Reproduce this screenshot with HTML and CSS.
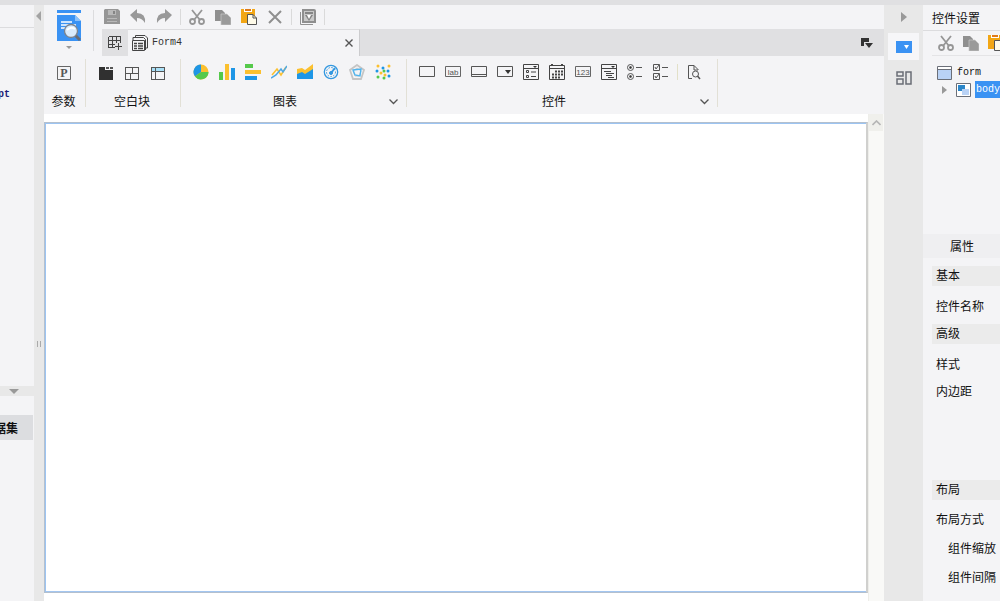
FILE: index.html
```html
<!DOCTYPE html>
<html lang="zh-CN">
<head>
<meta charset="utf-8">
<title>Form4</title>
<link rel="stylesheet" href="styles.css">
</head>
<body>
<div class="app">
  <aside class="left">
    <div class="left-top">
      <div class="left-head"></div>
      <div class="file">pt</div>
    </div>
    <button class="fold" aria-label="折叠"><svg width="10" height="5" viewBox="0 0 10 5"><path d="M0 0h10L5 5z" fill="#999"/></svg></button>
    <div class="left-bottom"><button class="dataset"><span>据集</span></button></div>
  </aside>

  <div class="splitter">
    <svg width="6" height="10" viewBox="0 0 6 10"><path d="M5 0v10L0 5z" fill="#a3a3a3"/></svg>
    <svg class="grip" width="4" height="6" viewBox="0 0 4 6" shape-rendering="crispEdges"><path d="M0 0h1v6H0zM3 0h1v6H3z" fill="#aaa"/></svg>
  </div>

  <main class="main">
    <header class="header">
      <button class="logo" aria-label="预览">
        <svg width="24" height="40" viewBox="0 0 24 40"><path d="M0 0h24v3H0zM0 5h18l6 6v20H0z" fill="#3a92f3"/><path d="M18 5v6h6z" fill="#8bc1fa"/><path d="M4 12h11M4 15h15M4 18h7" stroke="#fff" stroke-width="1.500"/><path d="M18 25l5 5" stroke="#686c75" stroke-width="3"/><circle cx="14" cy="21" r="6.500" fill="#d9ebfc" stroke="#7d838c" stroke-width="1.300"/><path d="M10 20q4-4 8-1" stroke="#fff" fill="none" stroke-width="2"/><path d="M9 36h6l-3 3z" fill="#999"/></svg>
      </button>
      <div class="header-body">
        <div class="quick">
          <button aria-label="保存"><svg viewBox="0 0 16 16"><path d="M1 0h13l2 2v13H0V1z" fill="#969696"/><path d="M4 1h8v5H4zM3 9h10v1H3zM3 12h10v1H3z" fill="#b9b9b9"/><path d="M9 2h2v3H9z" fill="#858585"/></svg></button>
          <button aria-label="撤销"><svg viewBox="0 0 16 16"><path d="M0 6l7-6v4q9 0 8 10-3-5-8-5v4z" fill="#999"/></svg></button>
          <button aria-label="重做"><svg viewBox="0 0 16 16"><path d="M16 6L9 0v4Q0 4 1 14q3-5 8-5v4z" fill="#999"/></svg></button>
          <i class="bar"></i>
          <button aria-label="剪切"><svg viewBox="0 0 16 16"><g fill="none" stroke="#969696" stroke-width="1.800"><path d="M3 1l8 10M13 1L5 11"/><circle cx="3.500" cy="12.500" r="2.500"/><circle cx="12.500" cy="12.500" r="2.500"/></g></svg></button>
          <button aria-label="复制"><svg viewBox="0 0 16 16"><path d="M0 1h7l3 3v8H0z" fill="#8f8f8f"/><path d="M6 5h6l4 4v7H6z" fill="#9a9a9a" stroke="#c8c8c8" stroke-width=".7"/></svg></button>
          <button aria-label="粘贴"><svg viewBox="0 0 16 16"><path d="M0 0h14v14H0z" fill="#f2a614"/><path d="M3 0h8v3H3z" fill="#fff"/><path d="M4 0h6v2H4z" fill="#df7a18"/><path d="M6.500 5.500H12l3.500 3.500v6.500h-9z" fill="#fffbe9" stroke="#555"/><path d="M12 5.500V9h3.500" fill="none" stroke="#555"/></svg></button>
          <button aria-label="删除"><svg viewBox="0 0 16 16"><path d="M2 2l12 12M14 2L2 14" stroke="#8f8f8f" stroke-width="2"/></svg></button>
          <i class="bar"></i>
          <button aria-label="模板"><svg viewBox="0 0 16 16"><path d="M0.500 3v12.500H13" fill="none" stroke="#929292"/><path d="M2 0h12q2 0 2 2v12H2z" fill="#8f8f8f"/><path d="M4 2h10v10H4z" fill="#c9c9c9"/><path d="M5 3h8v2H5zM5 6h8l-4 6z" fill="#858585"/><path d="M7 6h4l-2 4z" fill="#fff"/></svg></button>
          <i class="bar"></i>
        </div>
        <div class="tabs">
          <button class="add" aria-label="新建"><svg width="14" height="14" viewBox="0 0 14 14" fill="none" stroke="#444" shape-rendering="crispEdges"><path d="M.5.500h12v6M.5.500v11h6M0 4.500h13M0 8.500h7M4.500 0v12M8.500 0v7M10.500 7v7M7 10.500h7"/></svg></button>
          <div class="tab">
            <svg width="16" height="16" viewBox="0 0 16 16" fill="none" stroke="#444"><path d="M3.500 3V.5H13l2.500 2.500v10H13M1 5V2.500h10.500l2 2V15"/><path d="M.5 5.500h12v10H.5z"/><path d="M2 8.500h3M6 8.500h5M2 11h3m1 0h5M2 13.500h3m1 0h5" stroke-width="1.500"/></svg>
            <span class="name">Form4</span>
            <button class="close" aria-label="关闭"><svg width="8" height="8" viewBox="0 0 8 8"><path d="M.5.500l7 7M7.500.500l-7 7" stroke="#555" stroke-width="1.400"/></svg></button>
          </div>
          <div class="tab-space"><button aria-label="标签列表"><svg width="12" height="10" viewBox="0 0 12 10" fill="#333"><path d="M0 0h8v4H3v4H0zM4 5h8L8 10z"/></svg></button></div>
        </div>
      </div>
    </header>

    <section class="ribbon">
      <div class="group g-param">
        <div class="icons"><button aria-label="参数"><svg viewBox="0 0 16 16"><path d="M1.500 2.500h13v13h-13z" fill="none" stroke="#666"/><text x="8" y="13" text-anchor="middle" class="letter">P</text></svg></button></div>
        <div class="caption"><span>参数</span></div>
      </div>
      <div class="group g-block">
        <div class="icons">
          <button aria-label="标签块"><svg viewBox="0 0 16 16"><path d="M1 3h6v3h8v10H1z" fill="#303030"/><path d="M8 3h3v2H8zM12 3h3v2h-3z" fill="#555"/></svg></button>
          <button aria-label="布局块"><svg viewBox="0 0 16 16" fill="none" stroke="#555" shape-rendering="crispEdges"><path d="M1.500 3.500h13v12h-13zM1 9.500h13M8.500 3v6M6.500 9v6"/></svg></button>
          <button aria-label="报表块"><svg viewBox="0 0 16 16" fill="none" stroke="#555" shape-rendering="crispEdges"><path d="M1.500 3.500h13v12h-13z"/><path d="M2 4h12v3H2z" fill="#a9e0f8" stroke="none"/><path d="M1 7.500h13M5.500 3v12"/></svg></button>
        </div>
        <div class="caption"><span>空白块</span></div>
      </div>
      <div class="group g-chart">
        <div class="icons">
          <button aria-label="饼图"><svg viewBox="0 0 16 16"><circle cx="8" cy="8" r="7.500" fill="#fbc02f"/><path d="M8 8V.5A7.500 7.500 0 0 0 2 12.500z" fill="#1e96e6"/><path d="M8 8l-6 4.500A7.500 7.500 0 0 0 15.500 8z" fill="#55c94b"/></svg></button>
          <button aria-label="柱形图"><svg viewBox="0 0 16 16"><path d="M0 8h4v8H0z" fill="#55c94b"/><path d="M6 0h4v16H6z" fill="#fbc02f"/><path d="M12 4h4v12h-4z" fill="#1e96e6"/></svg></button>
          <button aria-label="条形图"><svg viewBox="0 0 16 16"><path d="M0 0h8v4H0z" fill="#55c94b"/><path d="M0 6h16v4H0z" fill="#fbc02f"/><path d="M0 12h12v4H0z" fill="#1e96e6"/></svg></button>
          <button aria-label="折线图"><svg viewBox="0 0 16 16" fill="none" stroke-width="1.500"><path d="M1 11l5-6 4 6 5-8" stroke="#fbc02f"/><path d="M0 14l5-3 5-6 2 3 4-6" stroke="#4aa8e8"/></svg></button>
          <button aria-label="面积图"><svg viewBox="0 0 16 16"><path d="M0 5l5-1 3 2 8-6v15H0z" fill="#fbc02f"/><path d="M0 10l5-2 3 2 8-5v10H0z" fill="#1e96e6"/></svg></button>
          <button aria-label="仪表盘"><svg viewBox="0 0 16 16" fill="none" stroke="#3398e0"><circle cx="8" cy="8" r="6.700" stroke-width="1.300"/><circle cx="8" cy="8" r="4.500" stroke-dasharray="1.500 1.500"/><path d="M8 9l4-5" stroke-width="2"/><circle cx="8" cy="9" r="1.500" fill="#3398e0"/></svg></button>
          <button aria-label="雷达图"><svg viewBox="0 0 16 16" fill="none"><path d="M8 1l7 5-3 9H4L1 6z" stroke="#c5c5c5" stroke-width="1.800"/><path d="M8 4l4 3-2 5H6L4 7z" stroke="#ccc"/><path d="M4 6l8-1-1 7-5-1z" stroke="#50b5ee" stroke-width="1.400"/></svg></button>
          <button aria-label="散点图"><svg viewBox="0 0 16 16"><g fill="#fbc02f"><circle cx="3" cy="2" r="1.500"/><circle cx="14" cy="2" r="1.500"/><circle cx="6" cy="9" r="1.500"/><circle cx="10" cy="11" r="1.500"/></g><g fill="#1e96e6"><circle cx="8" cy="4" r="1.500"/><circle cx="2" cy="7" r="1.500"/><circle cx="13" cy="7" r="1.500"/><circle cx="14" cy="12" r="1.500"/></g><g fill="#55c94b"><circle cx="9" cy="7" r="1.500"/><circle cx="3" cy="13" r="1.500"/><circle cx="9" cy="14" r="1.500"/></g></svg></button>
        </div>
        <div class="caption"><span>图表</span><button class="more" aria-label="更多图表"><svg width="9" height="6" viewBox="0 0 9 6"><path d="M.5.500l4 4 4-4" fill="none" stroke="#555" stroke-width="1.300"/></svg></button></div>
      </div>
      <div class="group g-widget">
        <div class="icons">
          <button aria-label="文本框"><svg viewBox="0 0 16 16"><path d="M.5 2.500h15v10H.5z" fill="none" stroke="#555"/></svg></button>
          <button aria-label="标签"><svg viewBox="0 0 16 16"><path d="M.5 2.500h15v10H.5z" fill="none" stroke="#666"/><text x="8" y="11" text-anchor="middle" class="glyph">lab</text></svg></button>
          <button aria-label="按钮"><svg viewBox="0 0 16 16"><path d="M.5 2.500h15v10H.5zM0 10.500h16" fill="none" stroke="#555"/></svg></button>
          <button aria-label="下拉框"><svg viewBox="0 0 16 16"><path d="M.5 2.500h15v10H.5z" fill="none" stroke="#555"/><path d="M8 6h6l-3 4z" fill="#333"/></svg></button>
          <button aria-label="下拉复选框"><svg viewBox="0 0 16 16" fill="none" stroke="#444"><path d="M.5.500h15v15H.5zM0 4.500h16M3.500 6.500h2v2h-2zM3.500 11.500h2v2h-2zM8 8h5M8 12.500h5"/><path d="M10 2h4l-2 2z" fill="#333" stroke="none"/></svg></button>
          <button aria-label="日期"><svg viewBox="0 0 16 16" fill="none" stroke="#444"><path d="M.5 1.500h15v14H.5zM0 4.500h16"/><path d="M3 0v3M13 0v3M6 7.500h8M3 10.500h11M3 13.500h8" stroke-width="2" stroke-dasharray="2 1"/></svg></button>
          <button aria-label="数字"><svg viewBox="0 0 16 16"><path d="M.5 2.500h15v10H.5z" fill="none" stroke="#666"/><text x="8" y="11" text-anchor="middle" class="glyph">123</text></svg></button>
          <button aria-label="下拉树"><svg viewBox="0 0 16 16" fill="none" stroke="#444"><path d="M.5.500h15v15H.5zM0 4.500h16M3 7.500h7M5 9.500h8M5 11.500h6M7 13.500h6"/><path d="M10 2h4l-2 2z" fill="#333" stroke="none"/></svg></button>
          <button aria-label="单选按钮组"><svg viewBox="0 0 16 16" fill="none" stroke="#555"><circle cx="3.500" cy="3.500" r="3"/><circle cx="3.500" cy="12.500" r="3"/><circle cx="3.500" cy="3.500" r="1" fill="#333"/><circle cx="3.500" cy="12.500" r="1" fill="#333"/><path d="M9 3.500h6M9 12.500h6"/></svg></button>
          <button aria-label="复选框组"><svg viewBox="0 0 16 16" fill="none" stroke="#555"><path d="M.5.500h6v6h-6zM.5 9.500h6v6h-6zM9 3.500h6M9 12.500h6M2 3l1 2 3-4M2 12l1 2 3-4"/></svg></button>
          <i class="bar"></i>
          <button aria-label="查询"><svg viewBox="0 0 16 16" fill="none" stroke="#555"><path d="M6 14.500H2.500v-13H8l4.500 4.500M8 1.500V6h4"/><circle cx="9.500" cy="10" r="3"/><path d="M11.500 12l2.500 3" stroke-width="1.500"/></svg></button>
        </div>
        <div class="caption"><span>控件</span><button class="more" aria-label="更多控件"><svg width="9" height="6" viewBox="0 0 9 6"><path d="M.5.500l4 4 4-4" fill="none" stroke="#555" stroke-width="1.300"/></svg></button></div>
      </div>
    </section>

    <section class="work">
      <div class="canvas"></div>
      <div class="scroll"><button aria-label="向上滚动"><svg width="9" height="6" viewBox="0 0 9 6"><path d="M.5 5l4-4 4 4" fill="none" stroke="#b5b5b5" stroke-width="1.600"/></svg></button></div>
    </section>
  </main>

  <nav class="strip">
    <button class="expand" aria-label="收起"><svg width="6" height="10" viewBox="0 0 6 10"><path d="M0 0v10l6-5z" fill="#999"/></svg></button>
    <button class="active" aria-label="控件设置"><svg width="16" height="12" viewBox="0 0 16 12"><path d="M0 0h16v12H0z" fill="#3a92f3"/><path d="M8 4h5l-2.500 4z" fill="#fff"/></svg></button>
    <button aria-label="组件库"><svg width="16" height="14" viewBox="0 0 16 14" fill="none" stroke="#6a6d75" stroke-width="1.500"><path d="M1 1h6v4H1zM1 8h6v5H1zM10 1h5v12h-5z"/></svg></button>
  </nav>

  <aside class="right">
    <h1 class="title">控件设置</h1>
    <div class="tools">
      <button aria-label="剪切"><svg viewBox="0 0 16 16"><g fill="none" stroke="#969696" stroke-width="1.800"><path d="M3 1l8 10M13 1L5 11"/><circle cx="3.500" cy="12.500" r="2.500"/><circle cx="12.500" cy="12.500" r="2.500"/></g></svg></button>
      <button aria-label="复制"><svg viewBox="0 0 16 16"><path d="M0 1h7l3 3v8H0z" fill="#8f8f8f"/><path d="M6 5h6l4 4v7H6z" fill="#9a9a9a" stroke="#c8c8c8" stroke-width=".7"/></svg></button>
      <button aria-label="粘贴"><svg viewBox="0 0 16 16"><path d="M0 0h14v14H0z" fill="#f2a614"/><path d="M3 0h8v3H3z" fill="#fff"/><path d="M4 0h6v2H4z" fill="#df7a18"/><path d="M6.500 5.500H12l3.500 3.500v6.500h-9z" fill="#fffbe9" stroke="#555"/></svg></button>
    </div>
    <div class="tree">
      <div class="node"><svg width="15" height="14" viewBox="0 0 15 14"><path d="M.5.500h14v13H.5z" fill="#fff" stroke="#6b6f78"/><path d="M1 4h13v9H1z" fill="#b9d2f5"/><path d="M1 3.500h13" stroke="#6b6f78"/></svg><span>form</span></div>
      <div class="node child"><svg width="5" height="8" viewBox="0 0 5 8"><path d="M0 0v8l5-4z" fill="#999"/></svg><svg width="15" height="14" viewBox="0 0 15 14"><path d="M.5.500h14v13H.5z" fill="#fff" stroke="#6b6f78"/><path d="M2 2h7v6H2z" fill="#2b86c9"/><path d="M6 6h7v6H6z" fill="#b9d2f5"/></svg><span class="selected">body</span></div>
    </div>
    <div class="prop-tab">属性</div>
    <div class="props">
      <h2>基本</h2>
      <div class="rows"><div>控件名称</div></div>
      <h2>高级</h2>
      <div class="rows advanced"><div>样式</div><div>内边距</div></div>
      <h2>布局</h2>
      <div class="rows layout"><div>布局方式</div><div class="sub">组件缩放</div><div class="sub">组件间隔</div></div>
    </div>
  </aside>
</div>
</body>
</html>
```

FILE: styles.css
```css
* { box-sizing: border-box; }
body {
  margin: 0;
  font: 12px/16px "Liberation Sans", "Noto Sans CJK SC", sans-serif;
  color: #111;
  background: #f4f4f6;
}
button {
  display: flex;
  align-items: center;
  justify-content: center;
  padding: 0;
  border: 0;
  background: none;
  font: inherit;
  color: inherit;
}
svg { display: block; flex: none; }
h1, h2 { margin: 0; font: inherit; }

.app {
  display: grid;
  grid-template-columns: 34px 10px minmax(0, 1fr) 39px 77px;
  height: 100vh;
  border-top: 5px solid #e0e0e2;
  overflow: hidden;
}

/* Left panel */
.left { display: flex; flex-direction: column; overflow: hidden; }
.left-top { flex: 381; }
.left-head { height: 23px; border-bottom: 1px solid #dcdcde; }
.file {
  padding-top: 59px;
  margin-left: -2px;
  font: 10px/16px "Liberation Mono", monospace;
  font-weight: bold;
  color: #1c1c78;
}
.fold { height: 10px; background: #e8e8e8; padding-right: 6px; }
.left-bottom { flex: 205; }
.dataset {
  width: 33px;
  height: 25px;
  margin-top: 19px;
  padding-top: 2px;
  background: #dcdde0;
  justify-content: flex-start;
  overflow: hidden;
  font-weight: bold;
}
.dataset span { margin-left: -6px; white-space: nowrap; }

.splitter {
  display: grid;
  grid-template-rows: 56fr 44fr;
  justify-items: center;
  padding-top: 6px;
  background: #e8e8e8;
}

/* Header */
.main { display: flex; flex-direction: column; min-width: 0; }
.header { display: flex; height: 51px; }
.logo {
  width: 50px;
  height: 41px;
  margin: 5px 8px 0 0;
  border-right: 1px solid #dcdcde;
  align-items: flex-start;
}
.header-body { flex: 1; display: flex; flex-direction: column; min-width: 0; }
.quick { display: flex; align-items: center; gap: 10px; height: 24px; padding-left: 2px; }
.quick button, .icons button, .tools button { width: 16px; height: 16px; flex: none; }
.quick svg, .icons svg, .tools svg { width: 16px; height: 16px; }
.bar { width: 1px; height: 16px; background: #dadada; flex: none; margin: 0 -2px; }
.tabs { display: flex; flex: 1; }
.add { width: 26px; background: #e0e0e2; }
.tab {
  display: flex;
  align-items: center;
  width: 232px;
  padding: 0 6px 0 4px;
  gap: 4px;
  border-top: 1px solid #dcdcde;
  border-right: 1px solid #ccccce;
}
.name { font: 10px/16px "Liberation Mono", monospace; color: #333; }
.close { margin-left: auto; }
.tab-space {
  flex: 1;
  display: flex;
  align-items: center;
  justify-content: flex-end;
  padding-right: 11px;
  background: #e0e0e2;
}

/* Ribbon */
.ribbon { display: flex; padding: 3px 0 7px; }
.group {
  display: flex;
  flex-direction: column;
  justify-content: space-between;
  height: 48px;
  padding-top: 5px;
  border-right: 1px solid #e2e0d6;
}
.g-param { width: 42px; }
.g-block { width: 95px; }
.g-chart { width: 226px; }
.g-widget { width: 311px; }
.icons { display: flex; gap: 10px; padding-left: 12px; }
.icons .bar { background: #e2e0c8; }
.caption {
  display: grid;
  grid-template-columns: 1fr auto 1fr;
  align-items: center;
  margin-bottom: -3px;
  padding-right: 2px;
}
.caption span { grid-column: 2; }
.g-chart .caption { grid-template-columns: 92px auto 1fr; padding-right: 8px; }
.g-widget .caption { grid-template-columns: 135px auto 1fr; padding-right: 8px; }
.more { justify-self: end; }
.glyph { font: 8px "Liberation Sans", sans-serif; fill: #555; }
.letter { font: bold 12px "Liberation Serif", serif; fill: #555; }

/* Canvas */
.work { flex: 1; display: grid; grid-template-columns: minmax(0, 1fr) 16px; background: #fff; }
.canvas {
  margin: 8px 0;
  border: 1px solid #b4c0ce;
  border-right: 2px solid #d0d0ce;
  box-shadow: inset 1px 1px #9cc4f2, inset 0 -1px #a3c6f0;
}
.scroll { background: #f9f9f7; border-left: 1px solid #eeeeea; }
.scroll button { width: 14px; height: 17px; background: #f0f0ec; }

/* Side strip */
.strip { display: flex; flex-direction: column; align-items: center; background: #e8e8e8; }
.strip button { width: 31px; height: 27px; }
.strip .expand { height: 23px; margin-bottom: 5px; }
.strip .active { background: #f6f6f8; margin-bottom: 4px; }

/* Right panel */
.right { overflow: hidden; white-space: nowrap; }
.title { height: 26px; padding: 6px 0 0 9px; border-bottom: 1px solid #dcdcde; }
.tools {
  display: flex;
  align-items: center;
  gap: 9px;
  height: 25px;
  margin-left: 9px;
  padding-left: 6px;
  border-bottom: 1px solid #e4e4e6;
}
.tree {
  height: 178px;
  padding: 8px 0 0 14px;
  font: 10px/17px "Liberation Mono", monospace;
}
.node { display: flex; align-items: center; gap: 5px; height: 17px; }
.node.child { padding-left: 5px; gap: 9px; }
.selected { margin-left: -5px; padding: 0 1px; background: #3a92f3; color: #fff; }
.prop-tab { height: 24px; padding: 5px 0 0 27px; background: #efeff1; }
.props { padding: 8px 0 0 9px; }
.props h2 { height: 20px; padding: 2px 0 0 4px; background: #ebebeb; }
.rows { display: grid; gap: 11px; padding: 13px 0 9px 4px; }
.advanced { padding-bottom: 80px; }
.layout { gap: 13px; padding-top: 12px; }
.sub { padding-left: 12px; }
```
